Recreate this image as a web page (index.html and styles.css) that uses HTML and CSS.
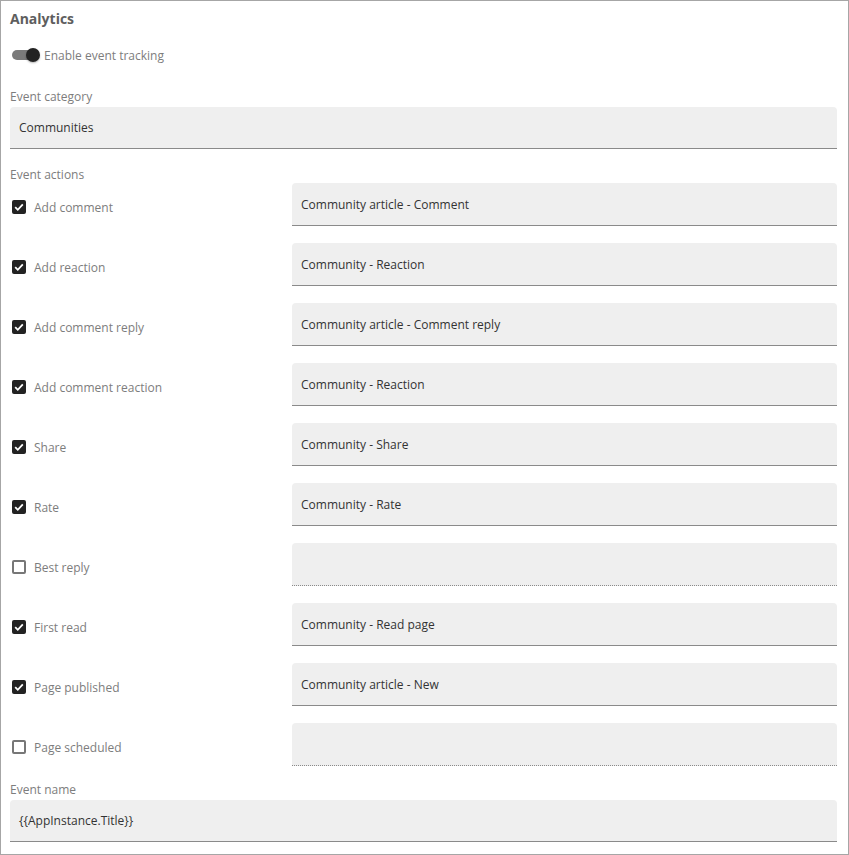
FILE: index.html
```html
<!DOCTYPE html>
<html>
<head>
<meta charset="utf-8">
<link rel="stylesheet" href="styles.css">
</head>
<body>
<div class="panel">
  <div class="title">Analytics</div>
  <div class="toggle-row">
    <span class="toggle"><span class="track"></span><span class="knob"></span></span>
    <span class="toggle-label">Enable event tracking</span>
  </div>
  <div class="label label-cat">Event category</div>
  <div class="field field-top">Communities</div>
  <div class="label label-actions">Event actions</div>
  <div class="actions">
    <div class="check"><span class="box on"><svg viewBox="0 0 14 14" width="14" height="14"><path d="M3.2 7.2l2.6 2.6 5-5.4" fill="none" stroke="#fff" stroke-width="1.8"/></svg></span><span class="check-label">Add comment</span></div>
    <div class="field">Community article - Comment</div>
    <div class="check"><span class="box on"><svg viewBox="0 0 14 14" width="14" height="14"><path d="M3.2 7.2l2.6 2.6 5-5.4" fill="none" stroke="#fff" stroke-width="1.8"/></svg></span><span class="check-label">Add reaction</span></div>
    <div class="field">Community - Reaction</div>
    <div class="check"><span class="box on"><svg viewBox="0 0 14 14" width="14" height="14"><path d="M3.2 7.2l2.6 2.6 5-5.4" fill="none" stroke="#fff" stroke-width="1.8"/></svg></span><span class="check-label">Add comment reply</span></div>
    <div class="field">Community article - Comment reply</div>
    <div class="check"><span class="box on"><svg viewBox="0 0 14 14" width="14" height="14"><path d="M3.2 7.2l2.6 2.6 5-5.4" fill="none" stroke="#fff" stroke-width="1.8"/></svg></span><span class="check-label">Add comment reaction</span></div>
    <div class="field">Community - Reaction</div>
    <div class="check"><span class="box on"><svg viewBox="0 0 14 14" width="14" height="14"><path d="M3.2 7.2l2.6 2.6 5-5.4" fill="none" stroke="#fff" stroke-width="1.8"/></svg></span><span class="check-label">Share</span></div>
    <div class="field">Community - Share</div>
    <div class="check"><span class="box on"><svg viewBox="0 0 14 14" width="14" height="14"><path d="M3.2 7.2l2.6 2.6 5-5.4" fill="none" stroke="#fff" stroke-width="1.8"/></svg></span><span class="check-label">Rate</span></div>
    <div class="field">Community - Rate</div>
    <div class="check"><span class="box"></span><span class="check-label">Best reply</span></div>
    <div class="field empty"></div>
    <div class="check"><span class="box on"><svg viewBox="0 0 14 14" width="14" height="14"><path d="M3.2 7.2l2.6 2.6 5-5.4" fill="none" stroke="#fff" stroke-width="1.8"/></svg></span><span class="check-label">First read</span></div>
    <div class="field">Community - Read page</div>
    <div class="check"><span class="box on"><svg viewBox="0 0 14 14" width="14" height="14"><path d="M3.2 7.2l2.6 2.6 5-5.4" fill="none" stroke="#fff" stroke-width="1.8"/></svg></span><span class="check-label">Page published</span></div>
    <div class="field">Community article - New</div>
    <div class="check"><span class="box"></span><span class="check-label">Page scheduled</span></div>
    <div class="field empty"></div>
  </div>
  <div class="label label-name">Event name</div>
  <div class="field field-top">{{AppInstance.Title}}</div>
</div>
</body>
</html>
```

FILE: styles.css
```css
html, body {
  margin: 0;
  padding: 0;
  background: #fff;
}

.panel {
  box-sizing: border-box;
  width: 849px;
  height: 855px;
  border: 1px solid #a6a6a6;
  padding: 8px 11px 0 9px;
  font-family: "Open Sans", "Noto Sans", sans-serif;
  overflow: hidden;
}

.title {
  font-size: 14px;
  font-weight: 700;
  line-height: 20px;
  color: #5e5e5e;
}

.toggle-row {
  margin-top: 16px;
  height: 20px;
  display: flex;
  align-items: center;
}

.toggle {
  position: relative;
  width: 28px;
  height: 20px;
  margin-left: 1px;
  margin-right: 5px;
}

.track {
  position: absolute;
  left: 1px;
  top: 5px;
  width: 24px;
  height: 10px;
  border-radius: 5px;
  background: #7a7a7a;
}

.knob {
  position: absolute;
  left: 15px;
  top: 3px;
  width: 14px;
  height: 14px;
  border-radius: 50%;
  background: #222;
  box-shadow: 0 1px 2px rgba(0,0,0,0.3);
}

.toggle-label {
  font-size: 12px;
  color: #7d7d7d;
}

.label {
  font-size: 12px;
  line-height: 16px;
  color: #7d7d7d;
}

.label-cat { margin-top: 24px; }
.label-actions { margin-top: 18px; }
.label-name { margin-top: 16px; }

.field {
  box-sizing: border-box;
  height: 42px;
  background: #efefef;
  border-bottom: 1px solid #8a8a8a;
  border-radius: 4px 4px 0 0;
  padding: 0 9px;
  display: flex;
  align-items: center;
  font-size: 12px;
  color: #333;
}

.field-top { margin-top: 2px; }

.field.empty {
  border-bottom: 1px dotted #8a8a8a;
}

.actions {
  margin-top: 0;
  display: grid;
  grid-template-columns: 282px 1fr;
  grid-auto-rows: 43px;
  row-gap: 17px;
}

.actions .field {
  height: 43px;
}

.check {
  display: flex;
  align-items: center;
  padding-top: 5px;
}

.box {
  box-sizing: border-box;
  width: 14px;
  height: 14px;
  margin-left: 2px;
  margin-right: 8px;
  border: 2px solid #777;
  border-radius: 2px;
  display: flex;
}

.box.on {
  border: none;
  background: #222;
}

.check-label {
  font-size: 12px;
  color: #7d7d7d;
}
```
